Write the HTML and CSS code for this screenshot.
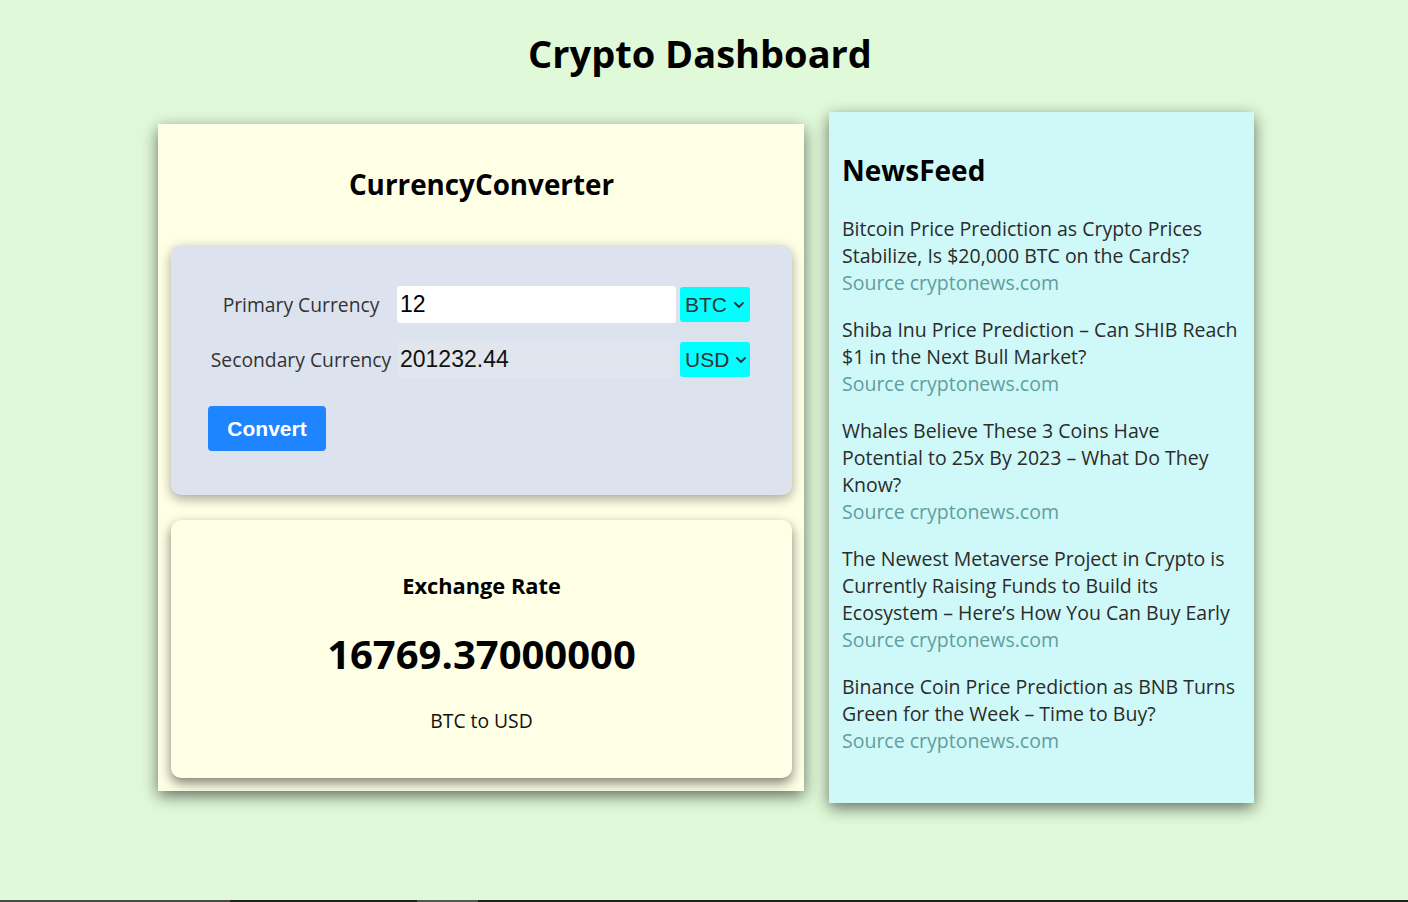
FILE: index.html
```html
<!DOCTYPE html>
<html lang="en">
<head>
<meta charset="utf-8">
<title>Crypto Dashboard</title>
<link rel="stylesheet" href="styles.css">
</head>
<body>
<h1 class="page-title">Crypto Dashboard</h1>
<main class="dashboard">
  <section class="converter-panel">
    <h2 class="converter-title">CurrencyConverter</h2>
    <div class="converter-box">
      <div class="converter-grid">
        <label class="field-label" for="primary">Primary Currency</label>
        <input class="amount-input" id="primary" type="number" value="12">
        <div class="currency-select">BTC<svg class="chevron" viewBox="0 0 10 6" width="10" height="6"><path d="M1 1l4 4 4-4" fill="none" stroke="#333" stroke-width="1.8" stroke-linecap="round" stroke-linejoin="round"/></svg></div>
        <label class="field-label" for="secondary">Secondary Currency</label>
        <input class="amount-input amount-input--disabled" id="secondary" type="text" value="201232.44" disabled>
        <div class="currency-select">USD<svg class="chevron" viewBox="0 0 10 6" width="10" height="6"><path d="M1 1l4 4 4-4" fill="none" stroke="#333" stroke-width="1.8" stroke-linecap="round" stroke-linejoin="round"/></svg></div>
      </div>
      <button class="convert-btn" type="button">Convert</button>
    </div>
    <div class="rate-box">
      <h3 class="rate-title">Exchange Rate</h3>
      <div class="rate-value">16769.37000000</div>
      <div class="rate-pair">BTC to USD</div>
    </div>
  </section>
  <section class="news-panel">
    <h2 class="news-title">NewsFeed</h2>
    <div class="news-item">
      <div class="news-headline">Bitcoin Price Prediction as Crypto Prices Stabilize, Is $20,000 BTC on the Cards?</div>
      <div class="news-source">Source cryptonews.com</div>
    </div>
    <div class="news-item">
      <div class="news-headline">Shiba Inu Price Prediction – Can SHIB Reach $1 in the Next Bull Market?</div>
      <div class="news-source">Source cryptonews.com</div>
    </div>
    <div class="news-item">
      <div class="news-headline">Whales Believe These 3 Coins Have Potential to 25x By 2023 – What Do They Know?</div>
      <div class="news-source">Source cryptonews.com</div>
    </div>
    <div class="news-item">
      <div class="news-headline">The Newest Metaverse Project in Crypto is Currently Raising Funds to Build its Ecosystem – Here’s How You Can Buy Early</div>
      <div class="news-source">Source cryptonews.com</div>
    </div>
    <div class="news-item">
      <div class="news-headline">Binance Coin Price Prediction as BNB Turns Green for the Week – Time to Buy?</div>
      <div class="news-source">Source cryptonews.com</div>
    </div>
  </section>
</main>
<div class="taskbar">
  <span class="taskbar-seg taskbar-seg--a"></span>
  <span class="taskbar-seg taskbar-seg--b"></span>
  <span class="taskbar-seg taskbar-seg--c"></span>
  <span class="taskbar-seg taskbar-seg--d"></span>
</div>
</body>
</html>
```

FILE: styles.css
```css
* { box-sizing: border-box; }

html, body {
  margin: 0;
  height: 100%;
}

body {
  background: #e0f9d8;
  font-family: "Open Sans", "Noto Sans", sans-serif;
  color: #000;
  overflow: hidden;
}

.page-title {
  margin: 0;
  padding-top: 26px;
  padding-right: 8px;
  height: 112px;
  text-align: center;
  font-size: 38px;
  line-height: 54px;
  font-weight: 700;
}

.dashboard {
  display: flex;
  justify-content: center;
  align-items: center;
  gap: 25px;
  padding-left: 4px;
}

/* Left panel */
.converter-panel {
  width: 646px;
  background: #ffffe6;
  padding: 0 12px 13px 13px;
  box-shadow: 0 5px 15px rgba(0, 0, 0, 0.55);
}

.converter-title {
  margin: 41px 0 42px;
  text-align: center;
  font-size: 27.8px;
  line-height: 38px;
  font-weight: 700;
}

.converter-box {
  height: 250px;
  background: #dce3ee;
  border-radius: 10px;
  padding: 41px 0 0 37px;
  box-shadow: 0 4px 12px rgba(0, 0, 0, 0.35);
}

.converter-grid {
  display: grid;
  grid-template-columns: 188px 279px 70px;
  column-gap: 0;
  row-gap: 18px;
  align-items: center;
}

.field-label {
  text-align: center;
  font-size: 19.3px;
  font-weight: 500;
  color: #333;
  padding-right: 2px;
}

.amount-input {
  width: 279px;
  height: 37px;
  margin-left: 1px;
  border: none;
  border-radius: 3px;
  background: #fff;
  padding: 0 3px;
  font-family: "Liberation Sans", Arial, sans-serif;
  font-size: 23px;
  color: #000;
  outline: none;
  -moz-appearance: textfield;
}

.amount-input::-webkit-outer-spin-button,
.amount-input::-webkit-inner-spin-button {
  -webkit-appearance: none;
  margin: 0;
}

.amount-input--disabled {
  background: #e1e6ee;
  color: #111;
}

.currency-select {
  margin-left: 5px;
  width: 70px;
  height: 35px;
  background: #00ffff;
  border-radius: 3px;
  display: flex;
  align-items: center;
  gap: 7px;
  padding-left: 5px;
  font-family: "Liberation Sans", Arial, sans-serif;
  font-size: 21px;
  color: #333;
}

.chevron { flex: none; margin-top: 1px; }

.convert-btn {
  margin-top: 28px;
  width: 118px;
  height: 45px;
  border: none;
  border-radius: 4px;
  background: #1e84ff;
  color: #fff;
  font-family: "Liberation Sans", Arial, sans-serif;
  font-weight: 700;
  font-size: 21px;
  padding: 0;
}

.rate-box {
  margin-top: 25px;
  height: 258px;
  background: #ffffe6;
  border-radius: 10px;
  box-shadow: 0 5px 12px rgba(0, 0, 0, 0.5);
  text-align: center;
  padding-top: 52px;
}

.rate-title {
  margin: 0;
  font-size: 21.8px;
  line-height: 28px;
  font-weight: 700;
}

.rate-value {
  margin-top: 28px;
  font-size: 40px;
  line-height: 52px;
  font-weight: 700;
}

.rate-pair {
  margin-top: 28px;
  font-size: 19.3px;
  font-weight: 500;
  line-height: 26px;
  color: #111;
}

/* Right panel */
.news-panel {
  width: 425px;
  background: #cff9f8;
  padding: 38px 14px 49px 13px;
  box-shadow: 0 5px 15px rgba(0, 0, 0, 0.55);
}

.news-title {
  margin: 0 0 25px;
  font-size: 28px;
  line-height: 40px;
  font-weight: 700;
}

.news-item {
  margin-bottom: 20px;
  font-size: 19.5px;
  font-weight: 500;
  line-height: 27px;
}

.news-item:last-child { margin-bottom: 0; }

.news-headline { color: #2b2b2b; }

.news-source { color: #5f9ea0; }

/* Bottom strip */
.taskbar {
  position: fixed;
  left: 0;
  right: 0;
  bottom: 0;
  height: 2px;
  display: flex;
  background: #1e2420;
}

.taskbar-seg { display: block; height: 100%; }
.taskbar-seg--a { width: 230px; background: #4a4a4a; }
.taskbar-seg--b { width: 187px; background: #1e2420; }
.taskbar-seg--c { width: 61px; background: #565656; }
.taskbar-seg--d { flex: 1; background: #1e2420; }
```
